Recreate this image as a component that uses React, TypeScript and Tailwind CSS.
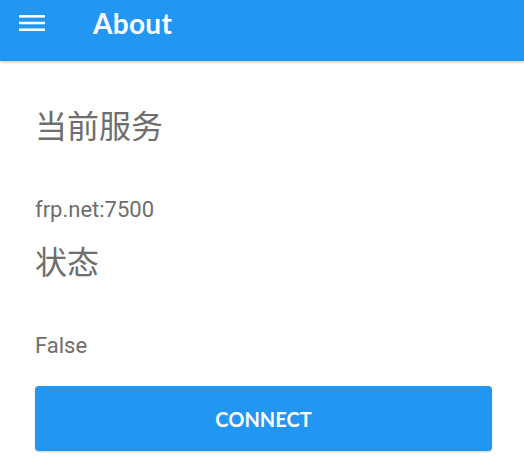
import React from "react";

export default function App() {
  return (
    <div className="w-[524px] h-[474px] bg-white overflow-hidden" style={{ fontFamily: "Roboto, 'Noto Sans CJK SC', sans-serif" }}>
      <header className="h-[61px] bg-[#2196f3] flex items-start shadow-[0_1px_3px_rgba(0,0,0,0.25)] relative z-10">
        <div className="w-[93px] pl-[19px] pt-[14px] flex">
          <svg width="26" height="18" viewBox="0 0 26 18">
            <rect x="0" y="1" width="26" height="2.6" fill="white" />
            <rect x="0" y="7.7" width="26" height="2.6" fill="white" />
            <rect x="0" y="14.4" width="26" height="2.6" fill="white" />
          </svg>
        </div>
        <h1 className="text-white text-[28px] font-bold leading-none pt-[9px] tracking-[0.3px]" style={{ fontFamily: "Lato, sans-serif" }}>About</h1>
      </header>
      <main className="px-[35px] pt-[46px] text-[#6e6e6e]">
        <div className="text-[32px] leading-[40px]">当前服务</div>
        <div className="mt-[50px] text-[22px] leading-[26px]">frp.net:7500</div>
        <div className="mt-[20px] text-[32px] leading-[40px]">状态</div>
        <div className="mt-[50px] text-[22px] leading-[26px]">False</div>
        <button className="mt-[27px] w-[457px] h-[65px] bg-[#2196f3] rounded-[4px] text-white text-[20px] font-bold shadow-[0_1px_2px_rgba(0,0,0,0.2)]" style={{ fontFamily: "Lato, sans-serif" }}>CONNECT</button>
      </main>
    </div>
  );
}
